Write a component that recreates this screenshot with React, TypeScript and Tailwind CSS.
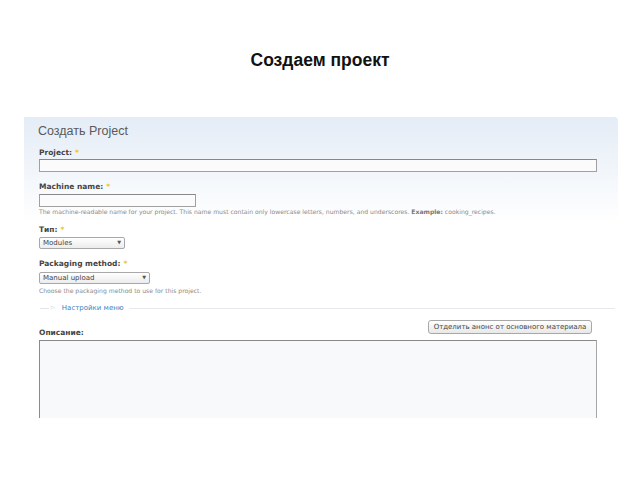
import React from 'react'

const formFont = { fontFamily: '"DejaVu Sans", Verdana, sans-serif' }

function Label({ text, required = true, className = '' }: { text: string; required?: boolean; className?: string }) {
    return (
        <div className={`h-[10px] leading-[10px] text-[7.5px] font-bold text-[#444] ${className}`}>
            {text}
            {required && <span className="text-[#f0c020] ml-[3px]">*</span>}
        </div>
    )
}

function FakeSelect({ value, width, className = '' }: { value: string; width: string; className?: string }) {
    return (
        <div
            className={`${width} h-[12px] flex items-center justify-between px-[3px] border border-[#a8a8a8]
            rounded-[2px] bg-gradient-to-b from-white to-[#ececec] text-[7px] text-[#444] ${className}`}
        >
            <span>{value}</span>
            <span className="text-[5px] text-[#555]">▼</span>
        </div>
    )
}

export default function App() {
    return (
        <div className="w-[640px] h-[480px] bg-white overflow-hidden">
            <div
                className="pt-[50px] h-[117px] text-center text-[17.5px] font-bold leading-[20px] text-[#111]"
                style={{ fontFamily: '"Liberation Sans", Arial, sans-serif' }}
            >
                Создаем проект
            </div>
            <div
                className="ml-[24px] w-[594px] h-[301px] overflow-hidden rounded-tr-[4px]
                bg-gradient-to-b from-[#e4ecf6] via-white via-[35%] to-white pl-[15px] pr-[21px]"
                style={formFont}
            >
                <div
                    className="mt-[6px] h-[16px] leading-[16px] text-[12.5px] text-[#5a5a5a] -ml-[1px]"
                    style={{ fontFamily: '"Liberation Sans", Arial, sans-serif' }}
                >
                    Создать Project
                </div>
                <Label text="Project:" className="mt-[9px]" />
                <div className="mt-[1px] h-[13px] w-full border border-[#a0a0a0] border-t-[#888] bg-[#fbfbfb]" />

                <Label text="Machine name:" className="mt-[10px]" />
                <div className="mt-[2px] h-[13px] w-[157px] border border-[#a0a0a0] border-t-[#888] bg-[#fbfbfb]" />
                <div className="mt-[1px] h-[8px] leading-[8px] text-[6.1px] text-[#8a8a8a] whitespace-nowrap">
                    The machine-readable name for your project. This name must contain only lowercase letters, numbers, and underscores.{' '}
                    <b className="text-[#777]">Example:</b> cooking_recipes.
                </div>

                <Label text="Тип:" className="mt-[9px]" />
                <FakeSelect value="Modules" width="w-[86px]" className="mt-[2px]" />

                <Label text="Packaging method:" className="mt-[10px]" />
                <FakeSelect value="Manual upload" width="w-[111px]" className="mt-[3px]" />
                <div className="mt-[3px] h-[8px] leading-[8px] text-[6.1px] text-[#8a8a8a] whitespace-nowrap">
                    Choose the packaging method to use for this project.
                </div>

                <div className="mt-[8px] h-[10px] flex items-center -mr-[18px]">
                    <div className="w-[9px] h-px bg-[#dfe4ea] ml-[1px]" />
                    <span className="ml-[2px] text-[5px] text-[#b8c0c8]">▷</span>
                    <span className="ml-[7px] text-[7px] text-[#3a7fbf] whitespace-nowrap">Настройки меню</span>
                    <div className="ml-[5px] flex-1 h-px bg-[#e6eaee]" />
                </div>

                <div className="flex justify-between items-start">
                    <Label text="Описание:" required={false} className="mt-[15px]" />
                    <div
                        className="mt-[7px] mr-[5px] h-[14px] w-[164px] flex items-center justify-center border border-[#a8a8a8]
                        rounded-[3px] bg-gradient-to-b from-white to-[#e8e8e8] text-[7px] text-[#444] whitespace-nowrap"
                    >
                        Отделить анонс от основного материала
                    </div>
                </div>
                <div className="mt-[2px] h-[120px] w-full border border-[#a8a8a8] border-t-[#8a8a8a] border-l-[#8a8a8a] bg-[#f8f9fa]" />
            </div>
        </div>
    )
}
